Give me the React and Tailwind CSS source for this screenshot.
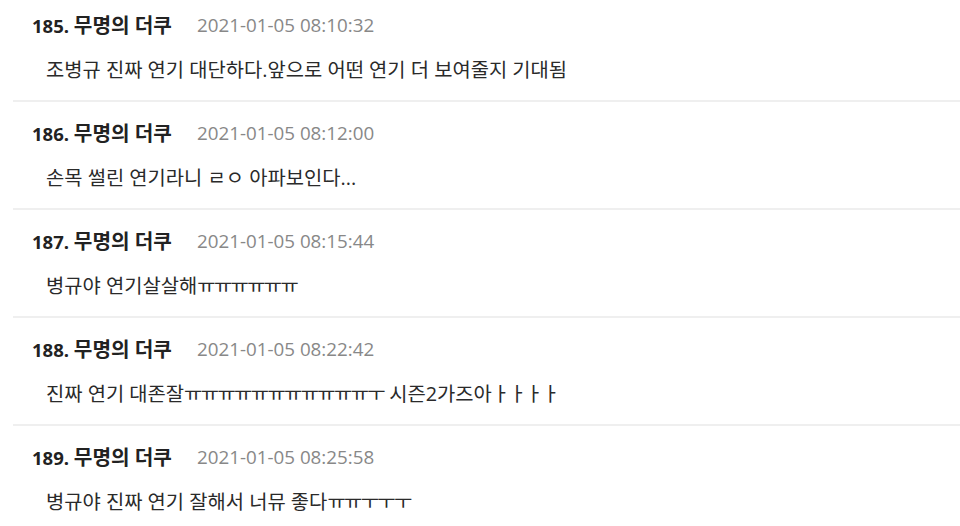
import React from "react";

const items = [
  { n: 185, t: "2021-01-05 08:10:32", c: "조병규 진짜 연기 대단하다.앞으로 어떤 연기 더 보여줄지 기대됨" },
  { n: 186, t: "2021-01-05 08:12:00", c: "손목 썰린 연기라니 ㄹㅇ 아파보인다..." },
  { n: 187, t: "2021-01-05 08:15:44", c: "병규야 연기살살해ㅠㅠㅠㅠㅠㅠ" },
  { n: 188, t: "2021-01-05 08:22:42", c: "진짜 연기 대존잘ㅠㅠㅠㅠㅠㅠㅠㅠㅠㅠㅠㅜ 시즌2가즈아ㅏㅏㅏㅏ" },
  { n: 189, t: "2021-01-05 08:25:58", c: "병규야 진짜 연기 잘해서 너뮤 좋다ㅠㅠㅜㅜㅜ" },
];

function Body({ text }) {
  const parts = text.split(/([ㅏㅜㅠ]+)/);
  return parts.map((p, i) =>
    /^[ㅏㅜㅠ]+$/.test(p) ? (
      <span key={i} className="tracking-[-1.6px]">
        {p}
      </span>
    ) : (
      <span key={i}>{p}</span>
    )
  );
}

export default function App() {
  return (
    <div
      className="w-[960px] h-[526px] overflow-hidden bg-white"
      style={{ fontFamily: '"Open Sans", "Noto Sans CJK KR", sans-serif' }}
    >
      {items.map((it) => (
        <div key={it.n} className="h-[108px]">
          <div className="ml-[13px] h-[102px] border-b-2 border-[#efefef]">
            <div className="flex items-center h-[50px] pl-[19px]">
              <span className="font-bold text-[#222] w-[165px] whitespace-nowrap">
                <span className="text-[18.5px]">{it.n}. </span>
                <span className="text-[20.2px]">무명의 더쿠</span>
              </span>
              <span className="text-[18.8px] text-[#888] whitespace-nowrap">{it.t}</span>
            </div>
            <div className="pl-[33px] text-[19.85px] text-[#2a2a2a] h-[40px] flex items-center whitespace-nowrap">
              <div>
                <Body text={it.c} />
              </div>
            </div>
          </div>
        </div>
      ))}
    </div>
  );
}
